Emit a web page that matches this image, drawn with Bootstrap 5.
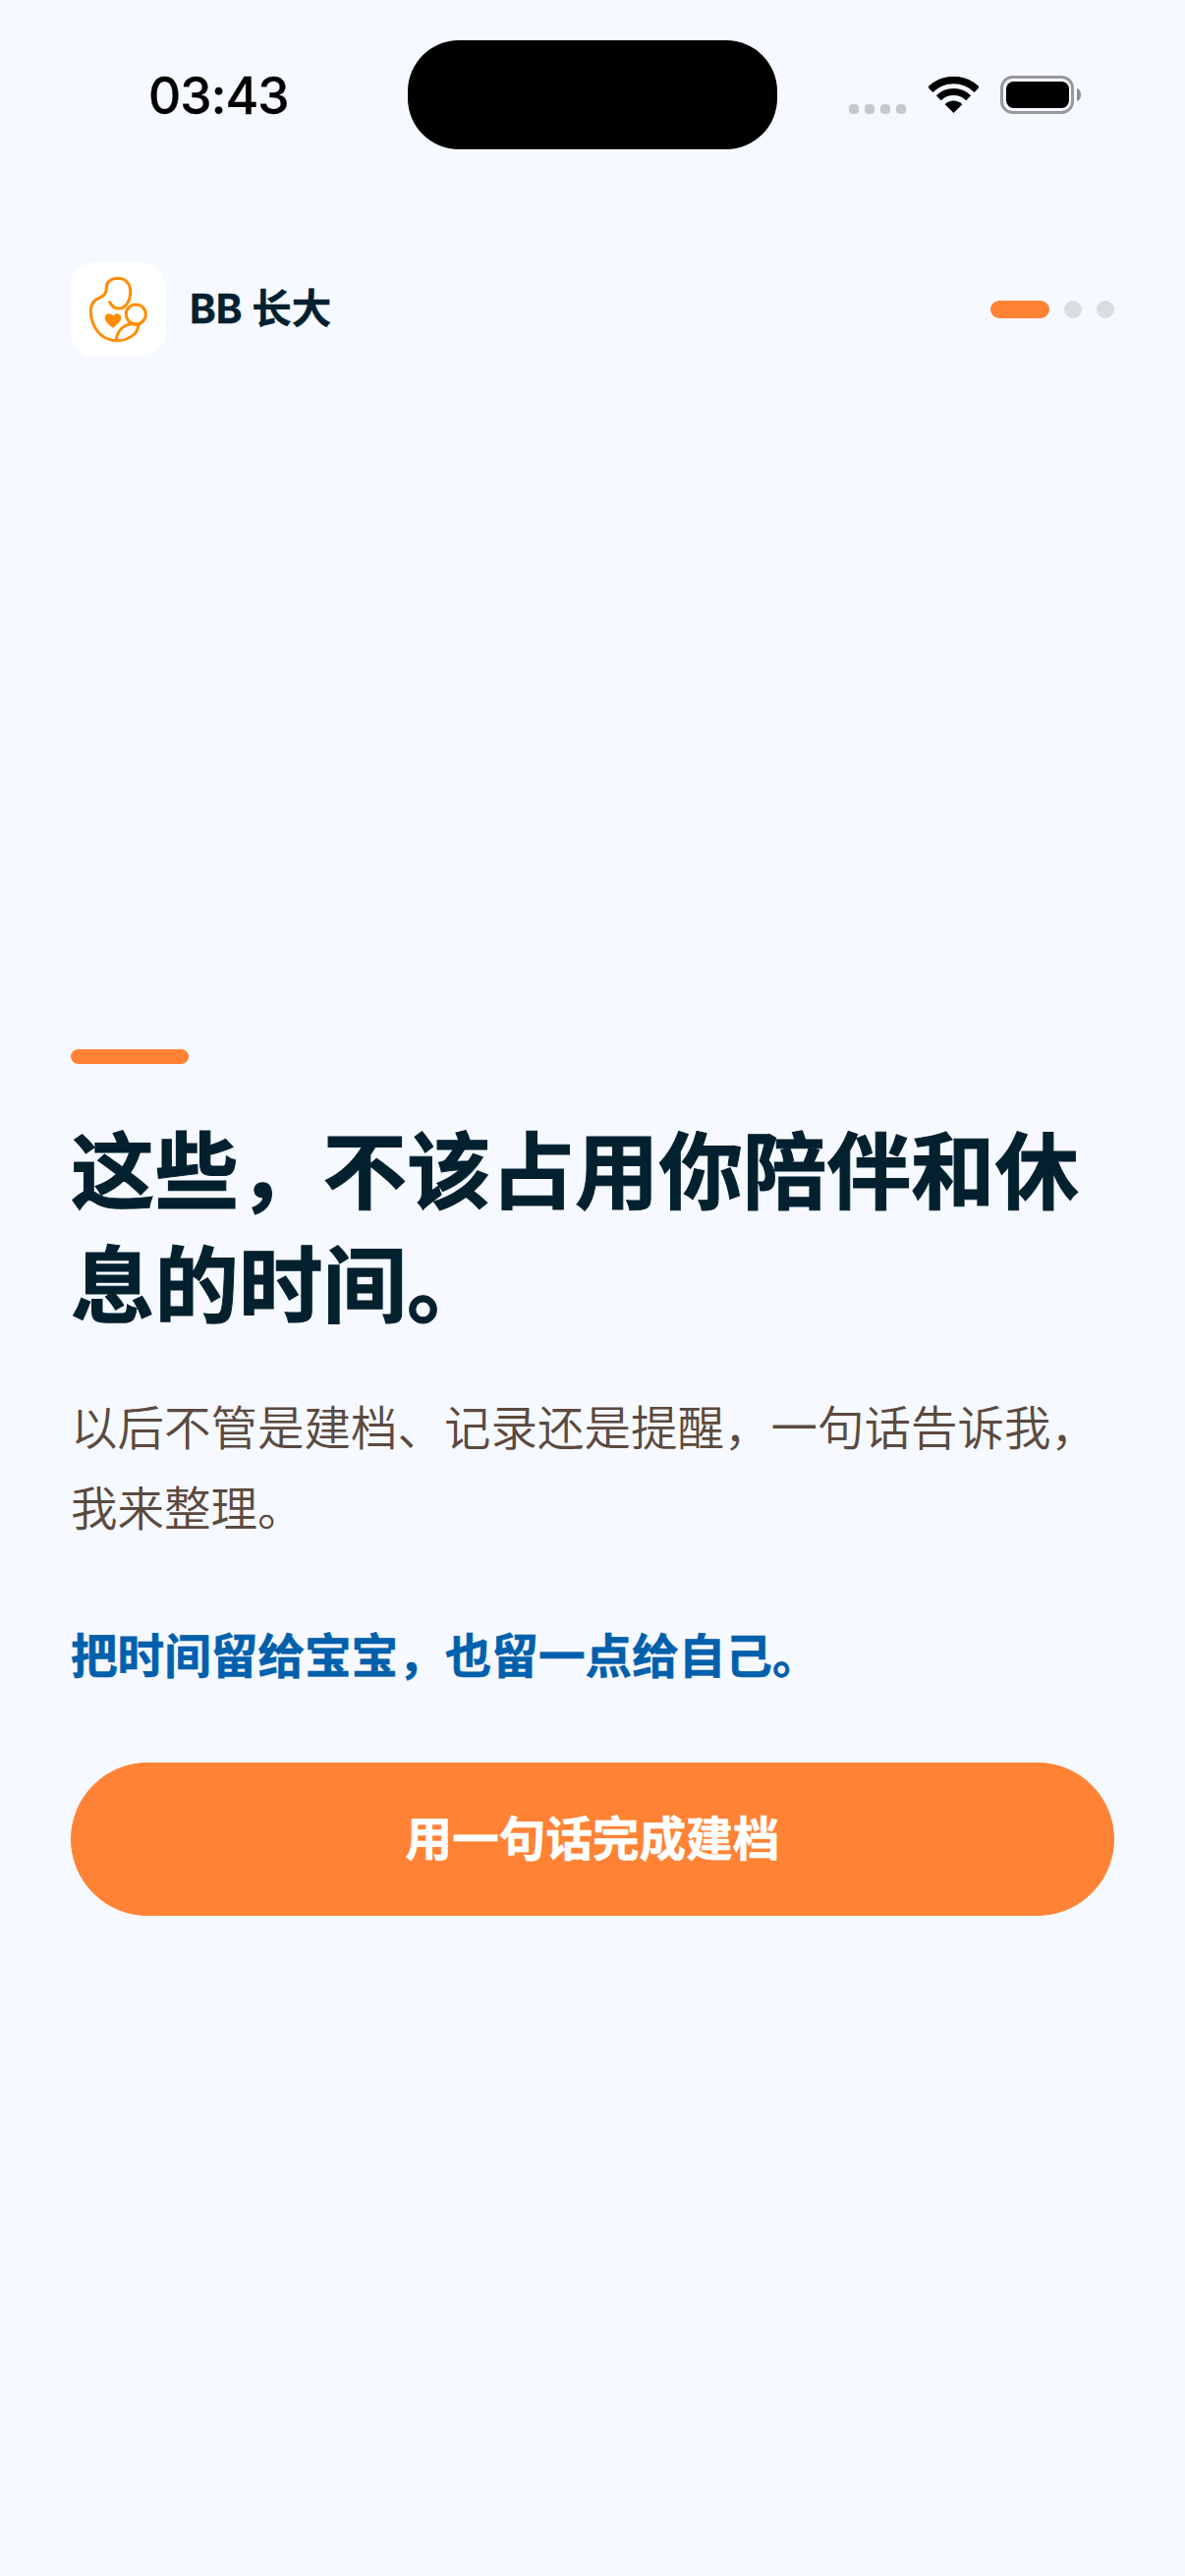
<!doctype html>
<html lang="zh-CN">
<head>
<meta charset="utf-8">
<title>BB 长大</title>
<link href="https://cdn.jsdelivr.net/npm/bootstrap@5.3.0/dist/css/bootstrap.min.css" rel="stylesheet">
<style>
html, body { background: #f6f9ff; }
body { font-family: Inter, "Noto Sans CJK SC", sans-serif; width: 1206px; min-height: 2622px; overflow: hidden; }
.status-row { padding-top: 41px; height: 152px; }
.clock-box { width: 415px; padding-left: 151px; padding-top: 3px; font-size: 51.5px; font-weight: 500; letter-spacing: -.9px; line-height: 1; color: #000; -webkit-text-stroke: .3px #000; }
.island { width: 376px; height: 111px; border-radius: 52px; background: #000; flex: none; }
.sys-icons { margin-left: 73px; }
.signal-dots { gap: 6px; margin-top: 29px; margin-right: 23px; }
.signal-dots span { width: 10px; height: 10px; border-radius: 4px; background: #c7c8cc; }
.wifi-mark { width: 51px; height: 37px; margin-right: 22px; }
.battery-mark { width: 82px; height: 39px; }
.top-head { margin-top: 115px; padding: 0 72px; }
.logo-tile { width: 96px; height: 96px; border-radius: 24px; background: #fff; }
.brand-name { margin-left: 25px; font-size: 40.5px; font-weight: 700; color: #03202f; line-height: 1; -webkit-text-stroke: .4px #03202f; }
.pager { gap: 15px; }
.pager span { width: 18px; height: 18px; border-radius: 9px; background: #d9dde2; }
.pager .pager-on { width: 60px; background: #ff8235; }
.hero { margin-top: 705px; padding: 0 72px; }
.accent-bar { width: 120px; height: 15px; border-radius: 8px; background: #ff8235; }
.hero-title { margin: 52px 0 0; font-size: 85.5px; font-weight: 700; line-height: 116px; color: #03202f; -webkit-text-stroke: 1px #03202f; }
.hero-sub { margin: 46px 0 0; font-size: 47.5px; font-weight: 350; line-height: 81.6px; color: #5b4a3f; }
.hero-note { margin: 74px 0 0; font-size: 47.6px; font-weight: 700; line-height: 72px; color: #0060ac; -webkit-text-stroke: .6px #0060ac; }
.cta-btn { --bs-btn-bg: #ff8235; --bs-btn-border-color: #ff8235; --bs-btn-hover-bg: #ff8235; --bs-btn-hover-border-color: #ff8235; --bs-btn-color: #fff; --bs-btn-hover-color: #fff;
  margin-top: 72px; width: 1062px; height: 156px; border-radius: 78px; font-size: 47.6px; font-weight: 700; -webkit-text-stroke: .6px #fff; }
</style>
</head>
<body>
<div class="d-flex flex-column">
  <div class="status-row d-flex align-items-center">
    <div class="clock-box">03:43</div>
    <div class="island"></div>
    <div class="sys-icons d-flex align-items-center">
      <div class="signal-dots d-flex"><span></span><span></span><span></span><span></span></div>
      <svg class="wifi-mark" viewBox="0 0 51 37" fill="none" aria-hidden="true">
        <path d="M1.8 13.3A33.5 33.5 0 0 1 49.2 13.3" stroke="#000" stroke-width="7.5"/>
        <path d="M10.3 21.8A21.5 21.5 0 0 1 40.7 21.8" stroke="#000" stroke-width="7"/>
        <path d="M25.5 37L16.66 28.16A12.5 12.5 0 0 1 34.34 28.16Z" fill="#000"/>
      </svg>
      <svg class="battery-mark" viewBox="0 0 82 39" fill="none" aria-hidden="true">
        <rect x="1.5" y="1.5" width="72" height="36" rx="11" stroke="#98989d" stroke-width="3"/>
        <rect x="6" y="6" width="64" height="27" rx="7.5" fill="#000"/>
        <path d="M78 13c2.6.6 4 3.2 4 6.500s-1.400 5.900-4 6.500z" fill="#8e8e93"/>
      </svg>
    </div>
  </div>

  <div class="top-head d-flex align-items-center justify-content-between">
    <div class="d-flex align-items-center">
      <div class="logo-tile d-flex">
        <svg width="96" height="96" viewBox="0 0 96 96" fill="none" aria-hidden="true">
          <g stroke="#ff8c00" stroke-width="3" stroke-linecap="round" stroke-linejoin="round">
            <path d="M39.700 40.700C41.500 44.700 45.500 47.200 49.700 47C56.500 46.500 60.700 38.500 60.700 29.700C60.700 21.500 55.500 16.300 48 16.300C41 16.300 36.300 20 36.300 25.500C36.300 29 35.800 32 33 34C30.500 35.800 27.500 36.500 25 38.500C21.500 41.500 20.300 45.500 20.300 50C20.300 59 24.500 68 29.700 73C34.500 77.500 41 79.700 48 79.700C54.500 79.700 61 76.500 65.500 72.500C67.500 70 68.700 67 69 63.700"/>
            <circle cx="66.300" cy="53" r="10"/>
            <path d="M46.300 79C47 72 51.500 66.500 56.700 64C60.500 62.300 65 62.500 69 63.700"/>
          </g>
          <path d="M43 67C38.500 63.200 34.700 60 34.700 56.500C34.700 53.800 36.700 52.200 38.900 52.200C40.600 52.200 42.200 53.100 43 54.600C43.800 53.100 45.400 52.200 47.100 52.200C49.300 52.200 51.300 53.800 51.300 56.500C51.300 60 47.500 63.200 43 67Z" fill="#ff8c00"/>
        </svg>
      </div>
      <div class="brand-name">BB 长大</div>
    </div>
    <div class="pager d-flex"><span class="pager-on"></span><span></span><span></span></div>
  </div>

  <div class="hero">
    <div class="accent-bar"></div>
    <h1 class="hero-title">这些，不该占用你陪伴和休息的时间。</h1>
    <p class="hero-sub">以后不管是建档、记录还是提醒，一句话告诉我，我来整理。</p>
    <p class="hero-note">把时间留给宝宝，也留一点给自己。</p>
    <button type="button" class="btn cta-btn d-block">用一句话完成建档</button>
  </div>
</div>
<script src="https://cdn.jsdelivr.net/npm/bootstrap@5.3.0/dist/js/bootstrap.bundle.min.js"></script>
</body>
</html>
